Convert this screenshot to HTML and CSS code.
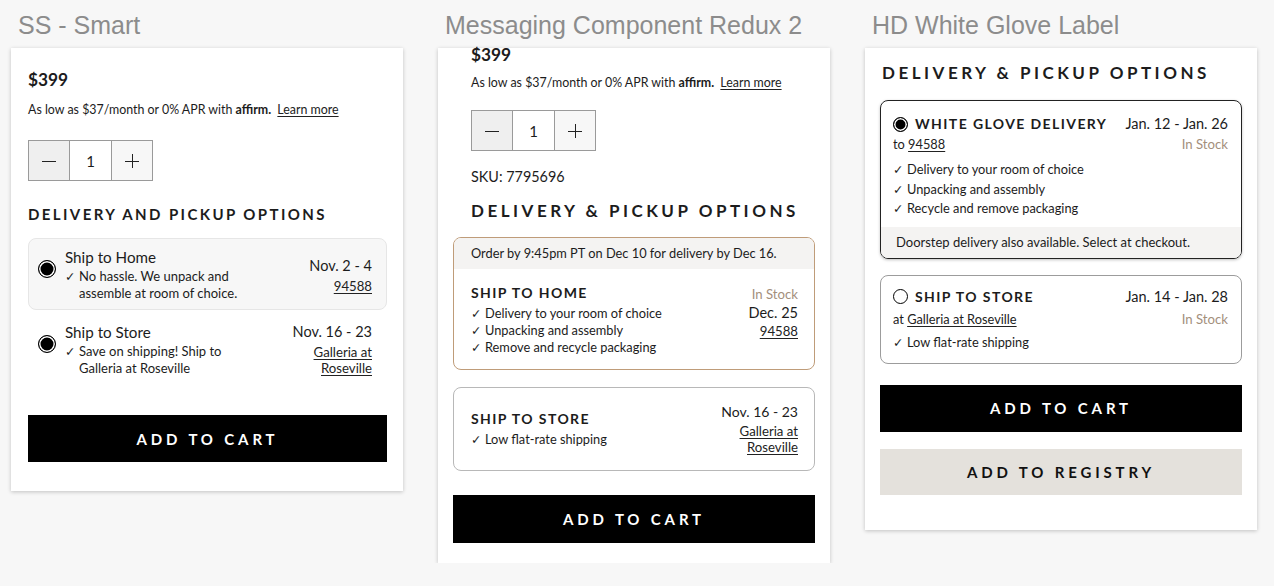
FILE: index.html
```html
<!DOCTYPE html>
<html lang="en">
<head>
<meta charset="utf-8">
<title>Delivery options variants</title>
<link rel="stylesheet" href="styles.css">
</head>
<body>
<div class="board">

  <section class="col">
    <h2 class="col-title">SS - Smart</h2>
    <div class="card card-smart">
      <div class="price">$399</div>
      <p class="affirm">As low as $37/month or 0% APR with <b>affirm.</b> <a class="link learn">Learn more</a></p>
      <div class="stepper">
        <span class="step step-minus"><svg width="14" height="14" viewBox="0 0 14 14"><path d="M0 7.5H14" stroke="#222" stroke-width="1"/></svg></span>
        <span class="step step-val">1</span>
        <span class="step step-plus"><svg width="14" height="14" viewBox="0 0 14 14"><path d="M0 7.5H14M7.5 0V14" stroke="#222" stroke-width="1"/></svg></span>
      </div>
      <h3 class="heading heading-sm">DELIVERY AND PICKUP OPTIONS</h3>
      <div class="sopt sopt-selected">
        <span class="radio radio-on radio-lg"></span>
        <div class="sopt-main">
          <div class="sopt-name">Ship to Home</div>
          <div class="check"><span class="tick">✓</span><span class="check-text">No hassle. We unpack and<br>assemble at room of choice.</span></div>
        </div>
        <div class="sopt-side sopt-side-low">
          <div class="side-date">Nov. 2 - 4</div>
          <a class="link side-link">94588</a>
        </div>
      </div>
      <div class="sopt">
        <span class="radio radio-on radio-lg"></span>
        <div class="sopt-main">
          <div class="sopt-name">Ship to Store</div>
          <div class="check"><span class="tick">✓</span><span class="check-text">Save on shipping! Ship to<br>Galleria at Roseville</span></div>
        </div>
        <div class="sopt-side">
          <div class="side-date">Nov. 16 - 23</div>
          <a class="link side-link">Galleria at<br>Roseville</a>
        </div>
      </div>
      <button class="btn btn-black btn-smart">ADD TO CART</button>
    </div>
  </section>

  <section class="col">
    <h2 class="col-title">Messaging Component Redux 2</h2>
    <div class="card card-redux">
      <div class="inset">
        <div class="price price-tight">$399</div>
        <p class="affirm affirm-redux">As low as $37/month or 0% APR with <b>affirm.</b> <a class="link learn">Learn more</a></p>
        <div class="stepper stepper-redux">
          <span class="step step-minus"><svg width="14" height="14" viewBox="0 0 14 14"><path d="M0 7.5H14" stroke="#222" stroke-width="1"/></svg></span>
          <span class="step step-val">1</span>
          <span class="step step-plus"><svg width="14" height="14" viewBox="0 0 14 14"><path d="M0 7.5H14M7.5 0V14" stroke="#222" stroke-width="1"/></svg></span>
        </div>
        <p class="sku">SKU: 7795696</p>
        <h3 class="heading heading-lg heading-redux">DELIVERY &amp; PICKUP OPTIONS</h3>
      </div>
      <div class="ropt ropt-tan">
        <div class="ropt-strip">Order by 9:45pm PT on Dec 10 for delivery by Dec 16.</div>
        <div class="ropt-body ropt-body-home">
          <div class="ropt-main">
            <div class="caps-name">SHIP TO HOME</div>
            <ul class="checks checks-redux">
              <li><span class="tick">✓</span>Delivery to your room of choice</li>
              <li><span class="tick">✓</span>Unpacking and assembly</li>
              <li><span class="tick">✓</span>Remove and recycle packaging</li>
            </ul>
          </div>
          <div class="ropt-side">
            <div class="stock">In Stock</div>
            <div class="side-date side-date-dec">Dec. 25</div>
            <a class="link side-link">94588</a>
          </div>
        </div>
      </div>
      <div class="ropt ropt-grey">
        <div class="ropt-body ropt-body-store">
          <div class="ropt-main">
            <div class="caps-name">SHIP TO STORE</div>
            <ul class="checks checks-redux">
              <li><span class="tick">✓</span>Low flat-rate shipping</li>
            </ul>
          </div>
          <div class="ropt-side">
            <div class="side-date">Nov. 16 - 23</div>
            <a class="link side-link side-link-tall">Galleria at<br>Roseville</a>
          </div>
        </div>
      </div>
      <button class="btn btn-black btn-redux">ADD TO CART</button>
    </div>
  </section>

  <section class="col">
    <h2 class="col-title">HD White Glove Label</h2>
    <div class="card card-hd">
      <h3 class="heading heading-lg heading-hd">DELIVERY &amp; PICKUP OPTIONS</h3>
      <div class="hopt hopt-active">
        <div class="hopt-inner">
          <div class="hrow">
            <span class="radio radio-on radio-sm"></span>
            <span class="caps-name hname">WHITE GLOVE DELIVERY</span>
            <span class="hdate">Jan. 12 - Jan. 26</span>
          </div>
          <div class="hrow hrow-sub">
            <span>to <a class="link">94588</a></span>
            <span class="stock">In Stock</span>
          </div>
          <ul class="checks checks-hd">
            <li><span class="tick">✓</span>Delivery to your room of choice</li>
            <li><span class="tick">✓</span>Unpacking and assembly</li>
            <li><span class="tick">✓</span>Recycle and remove packaging</li>
          </ul>
        </div>
        <div class="hopt-strip">Doorstep delivery also available. Select at checkout.</div>
      </div>
      <div class="hopt hopt-idle">
        <div class="hopt-inner hopt-inner-store">
          <div class="hrow">
            <span class="radio radio-off radio-sm"></span>
            <span class="caps-name hname">SHIP TO STORE</span>
            <span class="hdate">Jan. 14 - Jan. 28</span>
          </div>
          <div class="hrow hrow-sub hrow-sub-store">
            <span>at <a class="link">Galleria at Roseville</a></span>
            <span class="stock">In Stock</span>
          </div>
          <ul class="checks checks-hd checks-store">
            <li><span class="tick">✓</span>Low flat-rate shipping</li>
          </ul>
        </div>
      </div>
      <button class="btn btn-black btn-hd">ADD TO CART</button>
      <button class="btn btn-beige btn-reg">ADD TO REGISTRY</button>
    </div>
  </section>

</div>
</body>
</html>
```

FILE: styles.css
```css
* { box-sizing: border-box; }

body {
  margin: 0;
  background: #f7f7f7;
  font-family: Lato, "Noto Sans", sans-serif;
  color: #1c1c1c;
}

.board {
  display: flex;
  gap: 35px;
  padding-left: 11px;
  align-items: flex-start;
}

.col {
  width: 392px;
  flex: none;
}

.col-title {
  margin: 11px 0 9px 7px;
  font-family: "Liberation Sans", Arial, sans-serif;
  font-weight: 400;
  font-size: 25px;
  line-height: 28px;
  color: #8c8c8c;
}

.card {
  background: #fff;
  box-shadow: 0 1px 4px rgba(0, 0, 0, 0.22);
}

/* ---------- shared ---------- */

.price {
  font-weight: 700;
  font-size: 17.3px;
  line-height: 20px;
}

.affirm {
  margin: 12px 0 0;
  font-size: 12.4px;
  line-height: 16px;
}
.affirm b { font-weight: 700; }
.learn { margin-left: 3px; color: #444; }

.link {
  color: #222;
  text-decoration: underline;
  text-underline-offset: 2px;
}

.stepper {
  display: flex;
  width: 125px;
  height: 41px;
  margin-top: 22px;
  border: 1px solid #9a9a9a;
}
.step {
  flex: 1;
  display: flex;
  align-items: center;
  justify-content: center;
  font-size: 15px;
}
.step-minus { background: #efefef; border-right: 1px solid #9a9a9a; }
.step-val { background: #fff; border-right: 1px solid #9a9a9a; }
.step-plus { background: #f7f7f7; }

.heading {
  margin: 0;
  font-weight: 700;
}
.heading-sm {
  margin-top: 23px;
  font-size: 15px;
  line-height: 20px;
  letter-spacing: 2.4px;
}
.heading-lg {
  font-size: 17px;
  line-height: 22px;
  letter-spacing: 3.5px;
}

.radio {
  flex: none;
  border-radius: 50%;
  border: 1.5px solid #000;
}
.radio-on { background: #000; box-shadow: inset 0 0 0 1.5px #fff; }
.radio-off { background: #fff; }
.radio-lg { width: 18px; height: 18px; }
.radio-sm { width: 15px; height: 15px; }

.tick {
  font-family: "DejaVu Sans", sans-serif;
  font-size: 12.5px;
  width: 14px;
  flex: none;
}

.check {
  display: flex;
  font-size: 13px;
  line-height: 17px;
  margin-top: 2px;
}

.checks {
  list-style: none;
  margin: 0;
  padding: 0;
  font-size: 12.8px;
}
.checks li { display: flex; align-items: center; }

.stock {
  color: #a38f7c;
  font-size: 13.2px;
}

.caps-name {
  font-weight: 700;
  font-size: 14px;
  letter-spacing: 1.4px;
}

.btn {
  display: block;
  width: 100%;
  border: none;
  font-family: Lato, sans-serif;
  font-weight: 700;
  font-size: 15px;
  letter-spacing: 3.85px;
  text-align: center;
}
.btn-black { background: #000; color: #fff; }
.btn-beige { background: #e4e1dc; color: #111; }

/* ---------- card 1 ---------- */

.card-smart {
  padding: 22px 16px 29px 17px;
}

.sopt {
  display: flex;
  align-items: flex-start;
  margin-top: 3px;
  height: 72px;
  padding: 9px 14px 0 9px;
  border: 1px solid transparent;
  border-radius: 8px;
}
.sopt-selected {
  margin-top: 14px;
  background: #f7f7f7;
  border-color: #e6e6e6;
}
.sopt .radio { margin-top: 12px; }
.sopt-main { flex: 1; margin-left: 9px; }
.sopt-name { font-size: 15.2px; line-height: 18px; }
.sopt-side { text-align: right; }
.sopt-side-low { padding-top: 9px; }
.side-date { font-size: 14.5px; line-height: 18px; }
.side-link { display: block; font-size: 13.2px; line-height: 17px; margin-top: 1px; }
.sopt .side-link { line-height: 16px; margin-top: 3px; }

.btn-smart {
  margin-top: 30px;
  height: 47px;
}

/* ---------- card 2 ---------- */

.card-redux {
  padding: 0 15px 20px;
}
.inset { padding-left: 18px; }
.price-tight { line-height: 14px; }
.affirm-redux { margin-top: 13px; }
.stepper-redux { margin-top: 19px; }
.sku {
  margin: 17px 0 0;
  font-size: 14.4px;
  line-height: 18px;
}
.heading-redux { margin-top: 14px; }

.ropt {
  border-radius: 8px;
  overflow: hidden;
}
.ropt-tan {
  margin-top: 15px;
  border: 1px solid #bf9c79;
}
.ropt-grey {
  margin-top: 17px;
  height: 84px;
  border: 1px solid #b8b8b8;
  display: flex;
  align-items: center;
}
.ropt-strip {
  height: 31px;
  padding-left: 17px;
  background: #f4f3f2;
  font-size: 12.8px;
  line-height: 31px;
}
.ropt-body {
  display: flex;
  justify-content: space-between;
  padding: 0 16px 0 17px;
}
.ropt-body-home { padding-top: 15px; padding-bottom: 13px; }
.ropt-body-store { width: 100%; align-items: center; }
.caps-name { line-height: 18px; }
.checks-redux { margin-top: 3px; }
.checks-redux li { line-height: 17px; }
.ropt-side { text-align: right; }
.ropt-side .stock { line-height: 18px; padding-top: 1px; }
.ropt-side .side-date { font-size: 14px; }
.ropt-side .side-date-dec { margin-top: 1px; font-size: 14.5px; }
.side-link-tall { line-height: 15.5px; margin-top: 3px; }

.btn-redux {
  margin-top: 24px;
  height: 48px;
}

/* ---------- card 3 ---------- */

.card-hd {
  padding: 14px 15px 35px;
}
.heading-hd { margin-left: 2px; }

.hopt {
  border-radius: 8px;
  overflow: hidden;
}
.hopt-active {
  margin-top: 16px;
  border: 1px solid #222;
  box-shadow: 0 1px 3px rgba(0, 0, 0, 0.25);
}
.hopt-idle {
  margin-top: 16px;
  border: 1px solid #9c9c9c;
}
.hopt-inner { padding: 14px 13px 8px 12px; }
.hopt-inner-store { padding: 12px 13px 12px 12px; }

.hrow {
  display: flex;
  align-items: center;
  line-height: 18px;
}
.hname { margin-left: 7px; }
.hdate { margin-left: auto; font-size: 14.5px; }
.hrow-sub {
  justify-content: space-between;
  margin-top: 3px;
  font-size: 12.8px;
  line-height: 17px;
}
.hrow-sub-store { margin-top: 5px; }
.checks-hd { margin-top: 7px; }
.checks-hd li { line-height: 19.5px; }
.checks-store { margin-top: 6px; }
.checks-store li { line-height: 17px; }

.hopt-strip {
  height: 31px;
  padding-left: 15px;
  background: #f4f3f2;
  font-size: 13px;
  line-height: 31px;
}

.btn-hd {
  margin-top: 21px;
  height: 47px;
}
.btn-reg {
  margin-top: 17px;
  height: 46px;
}
```
